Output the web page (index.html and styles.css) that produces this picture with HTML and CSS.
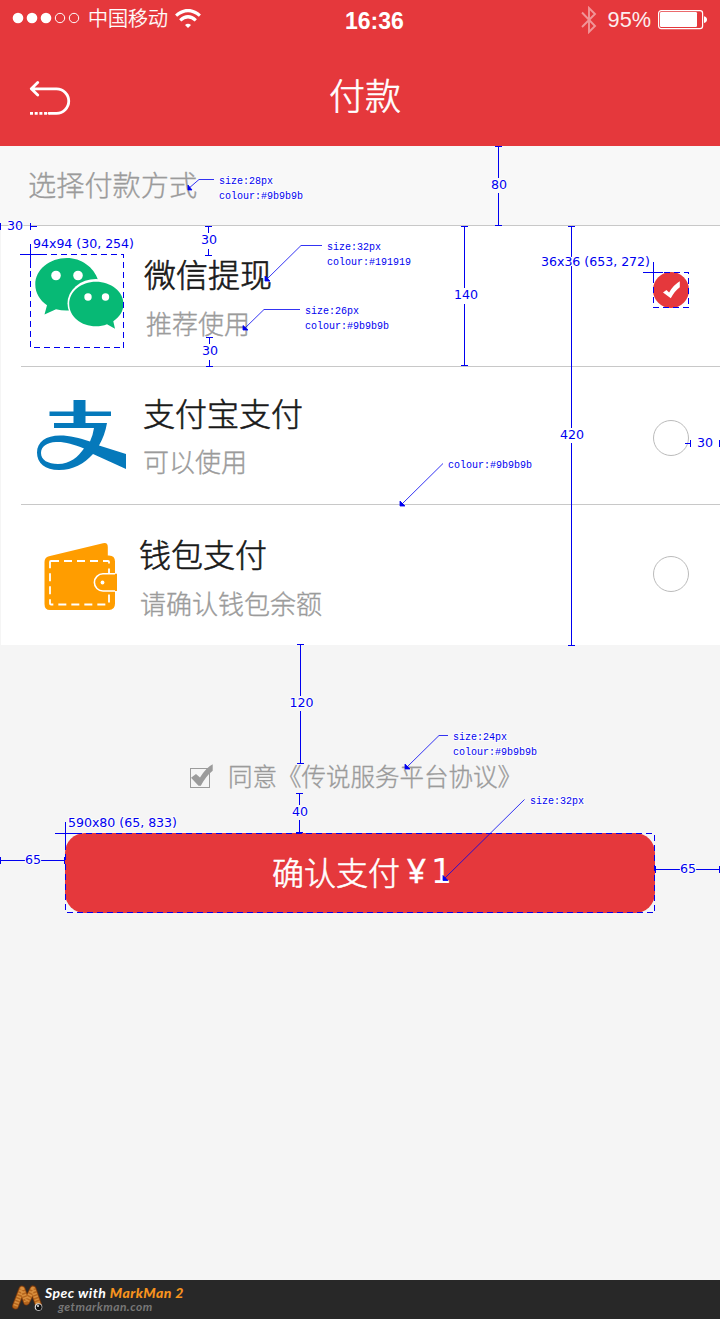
FILE: index.html
```html
<!DOCTYPE html>
<html lang="zh-CN">
<head>
<meta charset="utf-8">
<title>付款</title>
<link rel="stylesheet" href="styles.css">
</head>
<body>
<div class="screen">
  <header class="header">
    <div class="status">
      <div class="status-left">
        <svg class="signal" width="68" height="14" viewBox="0 0 68 14"><g fill="#fff"><circle cx="6" cy="7" r="5.3"/><circle cx="20" cy="7" r="5.3"/><circle cx="34" cy="7" r="5.3"/></g><g fill="none" stroke="#fff"><circle cx="48" cy="7" r="4.7"/><circle cx="62" cy="7" r="4.7"/></g></svg>
        <span class="carrier">中国移动</span>
        <svg class="wifi" width="26" height="20" viewBox="0 0 26 20" fill="none" stroke="#fff" stroke-width="3.2"><path d="M1.1 6.6Q13-3.600 24.900 6.600"/><path d="M5.200 11.400Q13 4.200 20.800 11.400"/><path d="M10 16Q13 13.500 16 16L13 19Z" fill="#fff" stroke="none"/></svg>
      </div>
      <span class="clock">16:36</span>
      <div class="status-right">
        <svg class="bluetooth" width="16" height="28" viewBox="0 0 16 28" fill="none" stroke="#f19598" stroke-width="1.9"><path d="M1 6.5L14 20L8 26V2L14 8L1 21"/></svg>
        <span class="percent">95%</span>
        <svg class="battery" width="49" height="20" viewBox="0 0 49 20"><rect x=".6" y=".6" width="44" height="18" rx="2.6" fill="none" stroke="#fff" stroke-width="1.2"/><rect x="2" y="2" width="37" height="15" rx="1.2" fill="#fff"/><path d="M46 6.2Q49 7 49 9.6T46 13Z" fill="#fff"/></svg>
      </div>
    </div>
    <div class="nav">
      <svg class="back" width="44" height="38" viewBox="0 0 44 38" fill="none" stroke="#fff" stroke-width="2.8"><path d="M9.700 1.500L3.300 7.800L9.700 14.100M4 7.800H28.500A12.250 12.250 0 0 1 28.500 32.300H21" stroke-linecap="round" stroke-linejoin="round"/><path d="M2 32.300H21.500" stroke-dasharray="3 1.7"/></svg>
      <h1 class="title">付款</h1>
    </div>
  </header>

  <h2 class="section">选择付款方式</h2>

  <main class="methods">
    <div class="method wechat">
      <svg class="logo" width="94" height="94" viewBox="0 0 94 94"><g fill="#07b975"><path d="M37 4C19.500 4 5.300 15.500 5.300 30.500C5.300 39 10 46.500 17 51.300L14.500 60.500L26 55.200C31 56.500 36 57 41 56.300C36 41 49 27 68 26C64 13 51 4 37 4Z"/></g><ellipse cx="66" cy="49.500" rx="28.500" ry="24.500" fill="#fff"/><path d="M66 27.700C51 27.700 39.200 37.500 39.200 50C39.200 62.500 51 72.300 66 72.300C70 72.300 73.500 71.500 77 70.200L85 74.800L83.300 67.300C89.500 63 93.500 57 93.500 50C93.500 37.500 81 27.700 66 27.700Z" fill="#07b975"/><g fill="#fff"><circle cx="26" cy="21.500" r="4.800"/><circle cx="48" cy="21.500" r="4.800"/><circle cx="58" cy="43" r="3.700"/><circle cx="75.500" cy="43" r="3.700"/></g></svg>
      <div class="label"><div class="name">微信提现</div><div class="note">推荐使用</div></div>
      <span class="radio checked"><svg width="36" height="36" viewBox="0 0 36 36"><path d="M10 20.500L13.400 18L16.100 20.400Q20.500 13 26.800 9.300V15.200Q22 18.500 17.800 26.200Z" fill="#fff"/></svg></span>
    </div>
    <div class="method alipay">
      <svg class="logo" width="94" height="94" viewBox="0 0 94 94"><path d="M43.500 9H55.500V20.500H81V25H55.500V32H77Q75 44 69 54.500L96 63V78L63 63C54 73 43 79 29 79C15 79 7 72 7 61.500C7 51 16 44.500 30 44.500C40 44.500 49 47 60 50.500Q63 44 64 37H24V32H43.500V25H19.500V20.500H43.500ZM54 57.500C43 53 34 50.500 26 51C17 51.500 11 55.500 11 62C11 69 18 73 28 73C40 73 48 66 54 57.500Z" fill="#0579bb" fill-rule="evenodd"/></svg>
      <div class="label"><div class="name">支付宝支付</div><div class="note">可以使用</div></div>
      <span class="radio"></span>
    </div>
    <div class="method wallet">
      <svg class="logo" width="94" height="94" viewBox="0 0 94 94"><path d="M14.500 42Q14.500 37.500 19 36.200L73 23.200Q77.800 22 77.800 27V35.500H79Q85 35.500 85 41.500V83.500Q85 90 79 90H20Q14.500 90 14.500 84Z" fill="#ff9d00"/><rect x="20" y="41" width="59" height="43.500" rx="1" fill="none" stroke="#fff" stroke-width="1.800" stroke-dasharray="8 5"/><path d="M87 53.800H73A9 8.600 0 0 0 73 71H87Z" fill="#ff9d00"/><path d="M85 53.800H73A8.600 8.600 0 0 0 73 71H85" fill="none" stroke="#fff" stroke-width="1.600"/><circle cx="72.500" cy="62.500" r="1.900" fill="#fff"/></svg>
      <div class="label"><div class="name">钱包支付</div><div class="note">请确认钱包余额</div></div>
      <span class="radio"></span>
    </div>
  </main>

  <div class="agreement">
    <svg class="checkbox" width="26" height="28" viewBox="0 0 26 28"><rect x="1.500" y="7.500" width="19" height="19" fill="none" stroke="#9b9b9b"/><path d="M2 16.800L7 13L11 16.500Q17 6.500 23.700 3.200V9.800Q17 15 11.800 24.800H9.500Z" fill="#9b9b9b"/></svg>
    <span>同意《传说服务平台协议》</span>
  </div>
  <div class="pay"><span>确认支付</span><span class="yen">¥</span><span class="amount">1</span></div>

  <footer class="credit">
    <svg class="mascot" width="34" height="32" viewBox="0 0 34 32" fill="none" stroke-linecap="round" stroke-linejoin="round"><path d="M3.500 24L10 7L14.500 20L21 7L26.500 23" stroke="#6e350f" stroke-width="7"/><path d="M3.500 24L10 7L14.500 20L21 7L26.500 23" stroke="#b5651d" stroke-width="5.500"/><path d="M3.500 24L10 7L14.500 20L21 7L26.500 23" stroke="#d88f3e" stroke-width="4.500" stroke-linecap="butt" stroke-dasharray="1.500 1.500"/><circle cx="26.500" cy="25" r="3.800" fill="#ddd"/><circle cx="26.800" cy="25.200" r="2.900" fill="#111"/><circle cx="26" cy="24" r=".9" fill="#fff"/></svg>
    <div class="credit-text"><div class="spec">Spec with <b>MarkMan 2</b></div><div class="site">getmarkman.com</div></div>
  </footer>

  <svg class="marks" width="720" height="1319" viewBox="0 0 720 1319">
    <g class="dim">
      <path d="M495 146.500h7M498.500 146v32M498.500 193v32M495 225.500h7"/>
      <path d="M.5 223v7M30.500 223v7M30 226.500h7"/>
      <path d="M205 226.500h7M208.500 226v7M208.500 249v6M205 255.500h7"/>
      <path d="M206 337.500h7M209.500 337v7M209.500 360v6M206 366.500h7"/>
      <path d="M461 226.500h7M464.500 226v62M464.500 304v61M461 365.500h7"/>
      <path d="M568 226.500h7M571.500 226v31M571.500 266v162M571.500 443v202M568 645.500h7"/>
      <path d="M685 443.500h6M690.500 440v7M719.500 440v7"/>
      <path d="M297 644.500h7M300.500 644v52M300.500 711v52M297 763.500h7"/>
      <path d="M296 793.500h7M299.500 793v12M299.500 820v12M296 832.500h7"/>
      <path d="M.5 857v7M1 860.500h24M41 860.500h24M64.500 857v7"/>
      <path d="M655.500 866v7M656 869.500h24M696 869.500h24M719.500 866v7"/>
      <path d="M20 254.500h24M30.500 244v24M643 272.500h20M653.500 262v20M55 833.500h24M65.500 822v24"/>
      <path class="dash" d="M30.500 254.500H123.500V347.500H30.500Z"/>
      <path class="dash" d="M653.500 272.500H688.500V307.500H653.500Z"/>
      <path class="dash" d="M65.500 833.500H654.500V912.500H65.500Z"/>
    </g>
    <g class="leader">
      <path d="M214 179.500H199L188 189M322 245.500H301L266 280M300 309.500H264L243 330M443 463.500L401 505M448 735.500H439L405 769M524.500 799.500L443 880"/>
      <path class="head" d="M188 185l4 5h-4zM265 276l5 5h-5zM243 325.500l5 4.500h-5zM400 501l5 5h-5zM405 764l5 5h-5zM443 875.500l5 5h-5z"/>
    </g>
    <g class="num">
      <text x="491" y="189">80</text><text x="7" y="230">30</text><text x="201" y="244">30</text><text x="202" y="355">30</text>
      <text x="454" y="299">140</text><text x="560" y="439">420</text><text x="697" y="447">30</text><text x="289.500" y="707">120</text>
      <text x="292" y="816">40</text><text x="25" y="864">65</text><text x="680" y="873">65</text>
      <text x="33" y="248" textLength="101">94x94 (30, 254)</text><text x="541" y="266" textLength="109">36x36 (653, 272)</text><text x="68" y="827" textLength="109">590x80 (65, 833)</text>
    </g>
    <g class="spec-note">
      <text x="219" y="184">size:28px</text><text x="219" y="199">colour:#9b9b9b</text>
      <text x="327" y="250">size:32px</text><text x="327" y="265">colour:#191919</text>
      <text x="305" y="314">size:26px</text><text x="305" y="329">colour:#9b9b9b</text>
      <text x="448" y="468">colour:#9b9b9b</text>
      <text x="453" y="740">size:24px</text><text x="453" y="755">colour:#9b9b9b</text>
      <text x="530" y="804">size:32px</text>
    </g>
  </svg>
</div>
</body>
</html>
```
FILE: styles.css
```css
* { box-sizing: border-box; }
body { margin: 0; background: #f5f5f5; font-family: "Noto Sans CJK SC", sans-serif; font-weight: 300; }
svg { display: block; flex: none; }
.screen { position: relative; display: flex; flex-direction: column; width: 720px; height: 1319px; overflow: hidden; background: #f5f5f5; }

.carrier, .section, .note, .agreement { -webkit-text-stroke: .35px currentColor; }
.title, .name, .pay { -webkit-text-stroke: .6px currentColor; }

.header { height: 146px; flex: none; background: #e5383c; color: #fff; }
.status { display: grid; grid-template-columns: 345px auto 1fr; height: 40px; padding-right: 13px; }
.status-left, .status-right { display: flex; align-items: flex-start; }
.status-left { padding-left: 12px; }
.status-right { justify-content: flex-end; }
.signal { margin-top: 11px; }
.carrier { margin: 3px 0 0 8px; font-size: 20px; line-height: 30px; }
.wifi { margin: 9px 0 0 7px; }
.clock { font: bold 23px/40px "Liberation Sans", sans-serif; padding-top: 1px; }
.bluetooth { margin-top: 6px; }
.percent { margin: 0 7px 0 11px; font: 21.7px/40px "Liberation Sans", sans-serif; opacity: .92; }
.battery { margin-top: 10px; }
.nav { display: grid; grid-template-columns: 301px auto; height: 106px; padding: 0 28px; }
.back { margin-top: 41px; }
.title { margin: 27px 0 0; font-size: 36px; line-height: 54px; font-weight: 300; }

.section { flex: none; height: 80px; margin: 0; padding: 17px 0 0 28px; border-bottom: 1px solid #c8c8c8; background: #f8f8f8; color: #9b9b9b; font-size: 28.2px; line-height: 42px; font-weight: 300; }

.methods { flex: none; margin-left: 1px; background: #fff; }
.method { display: flex; align-items: flex-start; padding: 0 31px 0 29px; }
.method:not(:last-child) { background: linear-gradient(#c8c8c8, #c8c8c8) 20px 100% / 100% 1px no-repeat; }
.wechat { height: 141px; }
.alipay { height: 138px; }
.wallet { height: 140px; }
.wechat .logo { margin-top: 28px; }
.alipay .logo { margin-top: 24px; overflow: visible; }
.wallet .logo { margin-top: 15px; }
.label { flex: 1; white-space: nowrap; }
.name { font-size: 32px; line-height: 48px; color: #191919; }
.note { font-size: 26px; line-height: 40px; color: #9b9b9b; }
.wechat .label { padding: 23px 0 0 20px; }
.wechat .note { margin: 6px 0 0 2px; }
.alipay .label { padding: 21px 0 0 19px; }
.alipay .note { margin: 5px 0 0; }
.wallet .label { padding: 24px 0 0 15px; }
.wallet .note { margin: 6px 0 0 1px; }
.radio { width: 36px; height: 36px; border: 1px solid #bbb; border-radius: 50%; }
.checked { border: 0; background: #e5383c; margin-top: 46px; }
.alipay .radio { margin-top: 53px; }
.wallet .radio { margin-top: 51px; }

.agreement { display: flex; flex: none; height: 188px; padding: 113px 0 0 189px; font-size: 24.5px; line-height: 36px; color: #9b9b9b; }
.checkbox { margin: 3px 13px 0 0; }
.pay { display: flex; flex: none; height: 80px; margin: 0 65px; padding: 14px 0 0 207px; border-radius: 20px; background: #e5383c; color: #fff; font-size: 32px; line-height: 48px; }
.yen { margin-left: 7px; font: 33px/48px "Open Sans", "Noto Sans", sans-serif; }
.amount { margin-left: 5px; font: 33px/50px "DejaVu Sans", sans-serif; -webkit-text-stroke: 0; }

.credit { display: flex; height: 39px; margin-top: auto; padding: 2px 0 0 12px; background: #282828; font: italic bold 14px/16px Lato, sans-serif; color: #fff; }
.credit-text { padding-top: 3px; }
.spec { margin-left: -1px; white-space: nowrap; letter-spacing: .45px; }
.spec b { color: #f7931e; }
.site { margin: -1px 0 0 12px; font-size: 12px; line-height: 14px; color: #777; letter-spacing: .45px; }

.marks { position: absolute; left: 0; top: 0; pointer-events: none; }
.dim path { fill: none; stroke: #0000f0; stroke-width: 1; shape-rendering: crispEdges; }
.dim .dash { stroke-dasharray: 6 4; }
.leader path { fill: none; stroke: #0000f0; stroke-width: .8; }
.leader .head { fill: #0000f0; }
.num text, .spec-note text { fill: #0000f0; stroke: rgba(255, 255, 255, .8); stroke-width: 2px; paint-order: stroke; font-weight: 400; }
.num text { font-family: "DejaVu Sans", sans-serif; font-size: 12.6px; }
.spec-note text { font-family: "Liberation Mono", monospace; font-size: 10px; }
```
